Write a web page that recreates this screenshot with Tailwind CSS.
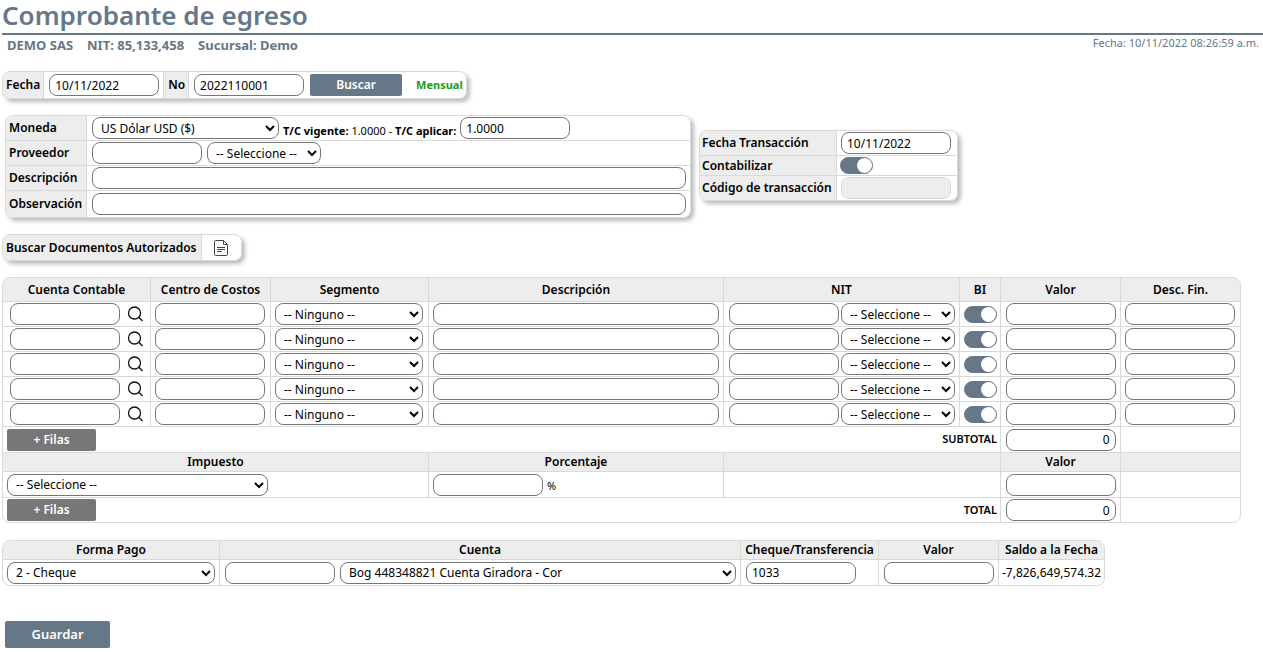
<!DOCTYPE html>
<html lang="es">
<head>
<meta charset="utf-8">
<title>Comprobante de egreso</title>
<meta name="viewport" content="width=device-width, initial-scale=1">
<script src="https://cdn.jsdelivr.net/npm/@tailwindcss/browser@4"></script>
</head>
<body class="bg-white pl-0.5 font-['Noto_Sans','Open_Sans',sans-serif] text-xs text-black">
<header>
  <h1 class="h-[35px] border-b-2 border-[#667788] text-[26px] leading-[31px] font-semibold text-[#667788]">Comprobante de egreso</h1>
  <div class="flex h-[22px] justify-between pr-1 text-[#667788]">
    <p class="flex gap-3.5 pl-[5px] text-[13px] leading-5 font-bold"><span>DEMO SAS</span><span>NIT: 85,133,458</span><span>Sucursal: Demo</span></p>
    <p class="text-[11px] leading-4">Fecha: 10/11/2022 08:26:59 a.m.</p>
  </div>
</header>

<main>
  <form class="mt-3.5 flex h-7 w-max items-stretch overflow-hidden rounded-lg border border-[#d9d9d9] shadow-[3px_3px_4px_#bbb]">
    <label for="fecha" class="flex items-center border-r border-[#d9d9d9] bg-[#ededed] px-[3px] font-semibold">Fecha</label>
    <div class="flex items-center pr-1 pl-[5px]"><input id="fecha" value="10/11/2022" class="h-[22px] w-[110px] rounded-lg border border-[#767676] px-[5px]"></div>
    <label for="numero" class="flex items-center border-x border-[#d9d9d9] bg-[#ededed] pr-[3px] pl-1 font-semibold">No</label>
    <div class="flex items-center gap-1.5 pr-[3px] pl-[5px]">
      <input id="numero" value="2022110001" class="h-[22px] w-[110px] rounded-lg border border-[#767676] px-[5px]">
      <button type="button" class="h-[22px] w-[92px] rounded-xs bg-[#667788] font-semibold text-white">Buscar</button>
      <span class="pl-2 text-[11px] font-bold text-[#1a9e1a]">Mensual</span>
    </div>
  </form>

  <div class="mt-4 flex items-start gap-2 pl-[3px]">
    <section class="w-[686px] overflow-hidden rounded-lg border border-[#d9d9d9] shadow-[3px_3px_4px_#bbb]">
      <div class="flex h-[25px] border-b border-[#d9d9d9]">
        <label for="moneda" class="flex w-[81px] items-center border-r border-[#d9d9d9] bg-[#ededed] pl-[3px] font-semibold">Moneda</label>
        <div class="flex flex-1 items-center gap-1 px-[5px]">
          <select id="moneda" class="h-[22px] w-[187px] rounded-lg border border-[#767676] px-1"><option>US Dólar USD ($)</option></select>
          <span class="pt-1.5 text-[11px]"><b class="font-bold">T/C vigente:</b> 1.0000 - <label for="tasa" class="font-bold">T/C aplicar:</label></span>
          <input id="tasa" value="1.0000" class="h-[22px] w-[110px] rounded-lg border border-[#767676] px-[5px]">
        </div>
      </div>
      <div class="flex h-[25px] border-b border-[#d9d9d9]">
        <label for="proveedor" class="flex w-[81px] items-center border-r border-[#d9d9d9] bg-[#ededed] pl-[3px] font-semibold">Proveedor</label>
        <div class="flex flex-1 items-center gap-[5px] px-[5px]">
          <input id="proveedor" class="h-[22px] w-[110px] rounded-lg border border-[#767676] px-[5px]">
          <select aria-label="Seleccionar proveedor" class="h-[22px] w-[114px] rounded-lg border border-[#767676] px-1"><option>-- Seleccione --</option></select>
        </div>
      </div>
      <div class="flex h-[25px] border-b border-[#d9d9d9]">
        <label for="descripcion" class="flex w-[81px] items-center border-r border-[#d9d9d9] bg-[#ededed] pl-[3px] font-semibold">Descripción</label>
        <div class="flex flex-1 items-center pr-1 pl-[5px]"><input id="descripcion" class="h-[22px] w-full rounded-lg border border-[#767676] px-[5px]"></div>
      </div>
      <div class="flex h-[26px]">
        <label for="observacion" class="flex w-[81px] items-center border-r border-[#d9d9d9] bg-[#ededed] pl-[3px] font-semibold">Observación</label>
        <div class="flex flex-1 items-center pr-1 pl-[5px]"><input id="observacion" class="h-[22px] w-full rounded-lg border border-[#767676] px-[5px]"></div>
      </div>
    </section>

    <section class="mt-[15px] w-[259px] overflow-hidden rounded-lg border border-[#d9d9d9] shadow-[3px_3px_4px_#bbb]">
      <div class="flex h-[25px] border-b border-[#d9d9d9]">
        <label for="fechatrans" class="flex w-[137px] items-center border-r border-[#d9d9d9] bg-[#ededed] pl-0.5 font-semibold">Fecha Transacción</label>
        <div class="flex items-center pl-1"><input id="fechatrans" value="10/11/2022" class="h-[22px] w-[110px] rounded-lg border border-[#767676] px-[5px]"></div>
      </div>
      <div class="flex h-5 border-b border-[#d9d9d9]">
        <label for="contabilizar" class="flex w-[137px] items-center border-r border-[#d9d9d9] bg-[#ededed] pl-0.5 font-semibold">Contabilizar</label>
        <div class="flex items-center pl-[3px]"><input id="contabilizar" type="checkbox" checked class="flex h-[17px] w-[33px] appearance-none items-center justify-start rounded-full border border-[#667788] bg-[#99a3ad] before:size-[15px] before:rounded-full before:bg-white checked:justify-end checked:bg-[#667788]"></div>
      </div>
      <div class="flex h-6">
        <label for="codigo" class="flex w-[137px] items-center border-r border-[#d9d9d9] bg-[#ededed] pl-0.5 font-semibold">Código de transacción</label>
        <div class="flex items-center pl-1"><input id="codigo" disabled class="h-[22px] w-[110px] rounded-lg border border-[#d9d9d9] bg-[#ededed] px-[5px]"></div>
      </div>
    </section>
  </div>

  <div class="mt-4 flex h-[27px] w-[240px] overflow-hidden rounded-lg border border-[#d9d9d9] shadow-[3px_3px_4px_#bbb]">
    <span class="flex w-[199px] items-center border-r border-[#d9d9d9] bg-[#ededed] pl-[3px] font-semibold">Buscar Documentos Autorizados</span>
    <button type="button" aria-label="Buscar documentos" class="flex flex-1 items-center pl-[11px]">
      <svg class="size-4" viewBox="0 0 16 16" fill="none" stroke="#444" stroke-width="1"><path d="M10.500.500H2.500a1 1 0 0 0-1 1v13a1 1 0 0 0 1 1h11a1 1 0 0 0 1-1v-10zM10.500.500v4h4"/><path d="M4 7.500h8M4 9.500h8M4 11.500h5"/></svg>
    </button>
  </div>

  <div class="mt-4 mr-[22px] overflow-hidden rounded-lg border border-[#d9d9d9]">
    <table class="w-full table-fixed border-separate border-spacing-0 [&_td]:border-[#d9d9d9] [&_td]:p-0 [&_th]:border-[#d9d9d9] [&_th]:p-0 [&_th]:font-semibold">
      <colgroup><col class="w-[148px]"><col class="w-[120px]"><col class="w-[158px]"><col><col class="w-[236px]"><col class="w-[41px]"><col class="w-[120px]"><col class="w-[119px]"></colgroup>
      <thead>
        <tr class="h-6 bg-[#ededed] [&>th]:border-b [&>th:not(:last-child)]:border-r"><th>Cuenta Contable</th><th>Centro de Costos</th><th>Segmento</th><th>Descripción</th><th>NIT</th><th>BI</th><th>Valor</th><th>Desc. Fin.</th></tr>
      </thead>
      <tbody id="lineas"></tbody>
      <tbody>
        <tr class="h-[26px] [&>td]:border-b">
          <td colspan="5"><button type="button" class="mx-1 block h-[22px] w-[89px] rounded-xs bg-[#777] font-semibold text-white">+ Filas</button></td>
          <td class="border-r"><label for="subtotal" class="float-right pr-[3px] text-[11px] font-semibold">SUBTOTAL</label></td>
          <td class="border-r"><input id="subtotal" value="0" class="mx-auto block h-[22px] w-[110px] rounded-lg border border-[#767676] px-[5px] text-right"></td>
          <td></td>
        </tr>
        <tr class="h-[19px] bg-[#ededed] leading-[18px] [&>th]:border-b [&>th:not(:last-child)]:border-r"><th colspan="3">Impuesto</th><th>Porcentaje</th><th colspan="2"></th><th>Valor</th><th></th></tr>
        <tr class="h-[26px] [&>td]:border-b [&>td:not(:last-child)]:border-r">
          <td colspan="3"><select aria-label="Impuesto" class="mx-1 block h-[22px] w-[261px] rounded-lg border border-[#767676] px-1"><option>-- Seleccione --</option></select></td>
          <td><div class="flex items-center gap-1 pl-1"><input aria-label="Porcentaje" class="h-[22px] w-[110px] rounded-lg border border-[#767676] px-[5px]"><span class="pt-1 text-[11px]">%</span></div></td>
          <td colspan="2"></td>
          <td><input aria-label="Valor del impuesto" class="mx-auto block h-[22px] w-[110px] rounded-lg border border-[#767676] px-[5px] text-right"></td>
          <td></td>
        </tr>
        <tr class="h-6">
          <td colspan="5"><button type="button" class="mx-1 block h-[22px] w-[89px] rounded-xs bg-[#777] font-semibold text-white">+ Filas</button></td>
          <td class="border-r"><label for="total" class="float-right pr-[3px] text-[11px] font-semibold">TOTAL</label></td>
          <td class="border-r"><input id="total" value="0" class="mx-auto block h-[22px] w-[110px] rounded-lg border border-[#767676] px-[5px] text-right"></td>
          <td></td>
        </tr>
      </tbody>
    </table>
  </div>

  <div class="mt-[17px] w-[1103px] overflow-hidden rounded-lg border border-[#d9d9d9]">
    <table class="w-full table-fixed border-separate border-spacing-0 [&_td]:border-[#d9d9d9] [&_td]:p-0 [&_th]:border-[#d9d9d9] [&_th]:p-0 [&_th]:font-semibold">
      <colgroup><col class="w-[217px]"><col><col class="w-[138px]"><col class="w-[120px]"><col class="w-[105px]"></colgroup>
      <thead><tr class="h-[19px] bg-[#ededed] leading-[18px] [&>th]:border-b [&>th:not(:last-child)]:border-r"><th>Forma Pago</th><th>Cuenta</th><th>Cheque/Transferencia</th><th>Valor</th><th>Saldo a la Fecha</th></tr></thead>
      <tbody>
        <tr class="h-[25px] [&>td:not(:last-child)]:border-r">
          <td><select aria-label="Forma de pago" class="mx-1 block h-[22px] w-[208px] rounded-lg border border-[#767676] px-1"><option>2 - Cheque</option></select></td>
          <td><div class="flex gap-[5px] pr-1 pl-[5px]"><input aria-label="Código de cuenta" class="h-[22px] w-[110px] rounded-lg border border-[#767676] px-[5px]"><select aria-label="Cuenta" class="h-[22px] min-w-0 flex-1 rounded-lg border border-[#767676] px-1"><option>Bog 448348821 Cuenta Giradora - Cor</option></select></div></td>
          <td><input aria-label="Cheque o transferencia" value="1033" class="ml-[5px] block h-[22px] w-[110px] rounded-lg border border-[#767676] px-[5px]"></td>
          <td><input aria-label="Valor del pago" class="ml-[5px] block h-[22px] w-[110px] rounded-lg border border-[#767676] px-[5px] text-right"></td>
          <td class="text-center">-7,826,649,574.32</td>
        </tr>
      </tbody>
    </table>
  </div>

  <button type="button" class="mt-[35px] ml-[3px] block h-[27px] w-[105px] rounded-xs bg-[#667788] text-[13px] font-semibold text-white">Guardar</button>
</main>

<template id="linea">
  <tr class="h-[25px] [&>td]:border-b [&>td:not(:last-child)]:border-r">
    <td><div class="flex items-center gap-[7px] pl-[7px]"><input aria-label="Cuenta contable" class="h-[22px] w-[110px] rounded-lg border border-[#767676] px-[5px]"><button type="button" aria-label="Buscar cuenta"><svg class="size-4" viewBox="0 0 16 16" fill="none" stroke="#111" stroke-width="1.300"><circle cx="7.500" cy="7" r="6"/><path d="M11.800 11.300l3.700 3.700"/></svg></button></div></td>
    <td><input aria-label="Centro de costos" class="ml-1 block h-[22px] w-[110px] rounded-lg border border-[#767676] px-[5px]"></td>
    <td><select aria-label="Segmento" class="ml-1 block h-[22px] w-[148px] rounded-lg border border-[#767676] px-1"><option>-- Ninguno --</option></select></td>
    <td><div class="px-1"><input aria-label="Descripción" class="block h-[22px] w-full rounded-lg border border-[#767676] px-[5px]"></div></td>
    <td><div class="flex gap-0.5 pl-[5px]"><input aria-label="NIT" class="h-[22px] w-[110px] rounded-lg border border-[#767676] px-[5px]"><select aria-label="Seleccionar NIT" class="h-[22px] w-[114px] rounded-lg border border-[#767676] px-1"><option>-- Seleccione --</option></select></div></td>
    <td><input aria-label="BI" type="checkbox" checked class="mx-auto flex h-[17px] w-[33px] appearance-none items-center justify-start rounded-full border border-[#667788] bg-[#99a3ad] before:size-[15px] before:rounded-full before:bg-white checked:justify-end checked:bg-[#667788]"></td>
    <td><input aria-label="Valor" class="mx-auto block h-[22px] w-[110px] rounded-lg border border-[#767676] px-[5px] text-right"></td>
    <td><input aria-label="Descuento financiero" class="ml-1 block h-[22px] w-[110px] rounded-lg border border-[#767676] px-[5px] text-right"></td>
  </tr>
</template>
<script>
  const linea = document.getElementById('linea');
  const lineas = document.getElementById('lineas');
  for (let i = 0; i < 5; i++) lineas.append(linea.content.cloneNode(true));
</script>
</body>
</html>
